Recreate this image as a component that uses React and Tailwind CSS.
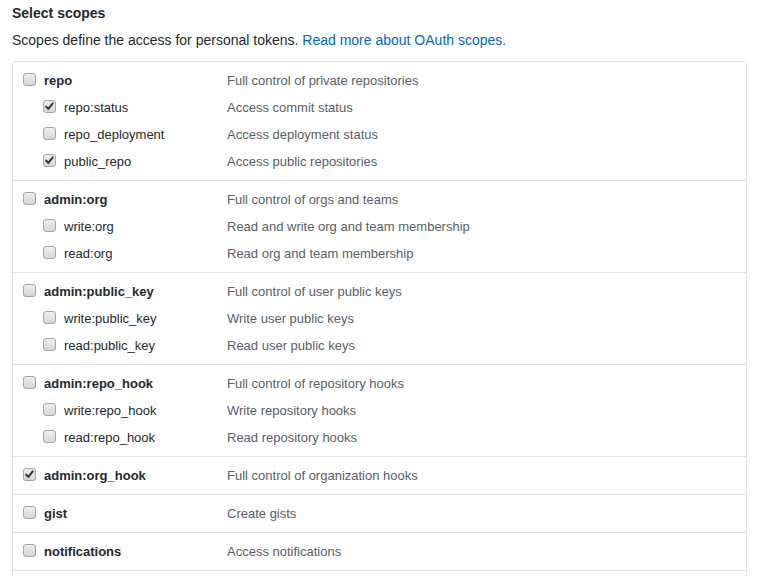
import React from "react";

const groups = [
  { name: "repo", desc: "Full control of private repositories", checked: false, children: [
    { name: "repo:status", desc: "Access commit status", checked: true },
    { name: "repo_deployment", desc: "Access deployment status", checked: false },
    { name: "public_repo", desc: "Access public repositories", checked: true },
  ]},
  { name: "admin:org", desc: "Full control of orgs and teams", children: [
    { name: "write:org", desc: "Read and write org and team membership" },
    { name: "read:org", desc: "Read org and team membership" },
  ]},
  { name: "admin:public_key", desc: "Full control of user public keys", children: [
    { name: "write:public_key", desc: "Write user public keys" },
    { name: "read:public_key", desc: "Read user public keys" },
  ]},
  { name: "admin:repo_hook", desc: "Full control of repository hooks", children: [
    { name: "write:repo_hook", desc: "Write repository hooks" },
    { name: "read:repo_hook", desc: "Read repository hooks" },
  ]},
  { name: "admin:org_hook", desc: "Full control of organization hooks", checked: true, children: [] },
  { name: "gist", desc: "Create gists", children: [] },
  { name: "notifications", desc: "Access notifications", children: [] },
];

function Box({ checked }) {
  return (
    <span className="relative mt-[6px] mr-[8px] inline-block h-[13px] w-[13px] shrink-0 rounded-[3px] border border-[#a6a6a6] bg-gradient-to-b from-[#efefef] to-[#d6d6d6]">
      {checked && (
        <svg viewBox="0 0 13 13" className="absolute left-[-1px] top-[-1px] h-[13px] w-[13px]">
          <path d="M3.2 6.6 L5.3 8.9 L9.8 3.4" fill="none" stroke="#333" strokeWidth="2" strokeLinecap="round" strokeLinejoin="round" />
        </svg>
      )}
    </span>
  );
}

function Row({ item, child }) {
  return (
    <div className="flex h-[27px] items-start">
      <div className={"flex w-[204px] shrink-0 items-start " + (child ? "pl-[20px]" : "")}>
        <Box checked={item.checked} />
        <span className={"leading-[27px] text-[#24292e] " + (child ? "" : "font-bold")}>{item.name}</span>
      </div>
      <span className="leading-[27px] text-[#586069]">{item.desc}</span>
    </div>
  );
}

export default function App() {
  return (
    <div className="h-[576px] overflow-hidden bg-white pl-[12px] pr-[12px] text-[14px] text-[#24292e]" style={{ fontFamily: '"Liberation Sans", Arial, sans-serif' }}>
      <div className="pt-[3px] text-[14px] font-bold leading-[20px]">Select scopes</div>
      <p className="mt-[7px] leading-[20px]">
        Scopes define the access for personal tokens.{" "}
        <span className="text-[#0366d6]">Read more about OAuth scopes.</span>
      </p>
      <div className="mt-[11px] w-[735px] rounded-[3px] border border-[#e1e4e8] text-[13px]">
        {groups.map((g) => (
          <div key={g.name} className="border-b border-[#e1e4e8] py-[5px] pl-[10px]">
            <Row item={g} />
            {g.children.map((c) => (
              <Row key={c.name} item={c} child />
            ))}
          </div>
        ))}
        <div className="h-[37px]" />
      </div>
    </div>
  );
}
